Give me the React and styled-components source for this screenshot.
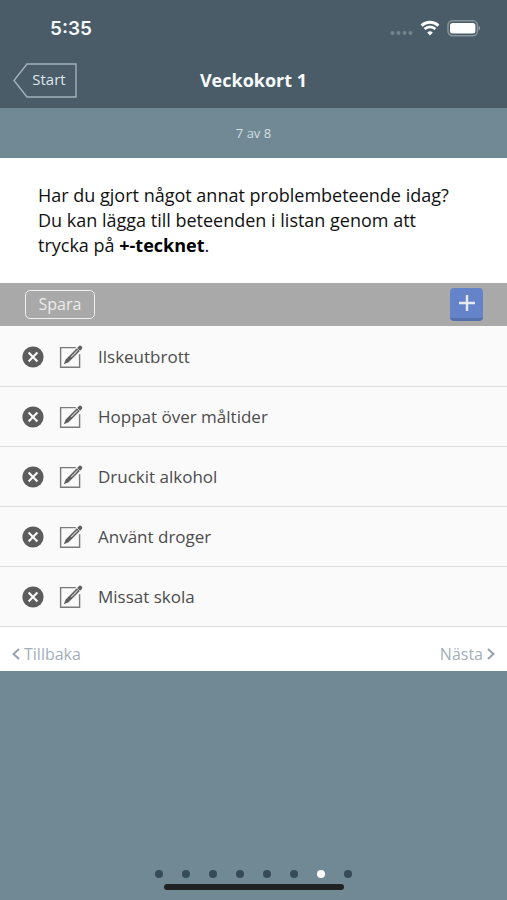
import React, { useState } from "react";
import styled, { createGlobalStyle } from "styled-components";

const behaviours = [
  "Ilskeutbrott",
  "Hoppat över måltider",
  "Druckit alkohol",
  "Använt droger",
  "Missat skola",
];

const PAGES = 8;

export default function App() {
  const [items, setItems] = useState(behaviours);
  const [page, setPage] = useState(7);

  const removeItem = (name) => setItems(items.filter((item) => item !== name));

  return (
    <Screen>
      <GlobalStyle />
      <Header>
        <StatusBar>
          <Clock>5:35</Clock>
          <StatusIcons>
            <SignalIcon />
            <WifiIcon />
            <BatteryIcon />
          </StatusIcons>
        </StatusBar>
        <NavBar>
          <StartButton type="button">
            <TagOutline />
            <StartLabel>Start</StartLabel>
          </StartButton>
          <Title>Veckokort 1</Title>
        </NavBar>
      </Header>
      <Progress>
        {page} av {PAGES}
      </Progress>
      <main>
        <Question>
          Har du gjort något annat problembeteende idag? Du kan lägga till
          beteenden i listan genom att trycka på <b>+-tecknet</b>.
        </Question>
        <Toolbar>
          <SaveButton type="button">Spara</SaveButton>
          <AddButton type="button" aria-label="Lägg till">
            <PlusIcon />
          </AddButton>
        </Toolbar>
        <List>
          {items.map((item) => (
            <Row key={item}>
              <IconButton
                type="button"
                aria-label={`Ta bort ${item}`}
                onClick={() => removeItem(item)}
              >
                <RemoveIcon />
              </IconButton>
              <IconButton type="button" aria-label={`Ändra ${item}`}>
                <EditIcon />
              </IconButton>
              <RowText>{item}</RowText>
            </Row>
          ))}
        </List>
        <Pager>
          <PagerButton
            type="button"
            onClick={() => setPage(Math.max(1, page - 1))}
          >
            <Chevron />
            Tillbaka
          </PagerButton>
          <PagerButton
            type="button"
            onClick={() => setPage(Math.min(PAGES, page + 1))}
          >
            Nästa
            <Chevron next />
          </PagerButton>
        </Pager>
      </main>
      <Bottom>
        <Dots>
          {Array.from({ length: PAGES }, (_, i) => (
            <Dot key={i} $active={i + 1 === page} />
          ))}
        </Dots>
        <HomeBar />
      </Bottom>
    </Screen>
  );
}

function SignalIcon() {
  return (
    <svg width="24" height="16" viewBox="0 0 24 16" fill="#75848d">
      <circle cx="3.5" cy="13" r="2" />
      <circle cx="9.5" cy="13" r="2" />
      <circle cx="15.5" cy="13" r="2" />
      <circle cx="21.5" cy="13" r="2" />
    </svg>
  );
}

function WifiIcon() {
  return (
    <svg width="20" height="16" viewBox="0 0 20 16" fill="none">
      <path d="M1.6 5.6a12.2 12.2 0 0 1 16.8 0" stroke="#fff" strokeWidth="2.9" />
      <path d="M4.6 9a7.8 7.8 0 0 1 10.8 0" stroke="#fff" strokeWidth="2.6" />
      <path d="M10 15.6 7.2 12.5a4 4 0 0 1 5.6 0z" fill="#fff" />
    </svg>
  );
}

function BatteryIcon() {
  return (
    <svg width="34" height="18" viewBox="0 0 34 18" fill="none">
      <rect x="1" y="1.7" width="29.4" height="15" rx="4.5" stroke="#87949b" strokeWidth="1.5" />
      <rect x="3" y="4" width="25.4" height="10.4" rx="2.5" fill="#fff" />
      <path d="M31.7 7c1.6.6 1.6 3.8 0 4.4z" fill="#a5afb5" />
    </svg>
  );
}

function TagOutline() {
  return (
    <TagSvg viewBox="0 0 64 35" fill="none">
      <path d="M1 17.5 14 1h49v33H14z" stroke="#a3b1b9" strokeWidth="1.4" />
    </TagSvg>
  );
}

function PlusIcon() {
  return (
    <svg width="16" height="16" viewBox="0 0 16 16" stroke="#e4e9f4" strokeWidth="2.4">
      <path d="M8 0v16M0 8h16" />
    </svg>
  );
}

function RemoveIcon() {
  return (
    <svg width="22" height="22" viewBox="0 0 22 22" fill="none">
      <circle cx="11" cy="11" r="10.6" fill="#5c5c5c" />
      <path d="m6.6 6.6 8.8 8.8m0-8.8-8.8 8.8" stroke="#fafafa" strokeWidth="2.1" />
    </svg>
  );
}

function EditIcon() {
  return (
    <svg width="24" height="24" viewBox="0 0 24 24" fill="none">
      <path d="M16.8 2.6H1.6v19.6h19V9.2" stroke="#7b7b7b" strokeWidth="1.4" />
      <path d="M4.8 19.2 6.6 14.4 19.6 1.4a2 2 0 0 1 3 2.8L9.6 17.2z" fill="#5f5f5f" />
      <path d="M12.2 11.8 18.6 5.4" stroke="#d2d2d2" strokeWidth="1.2" />
      <path d="m18 3 3 3" stroke="#f4f4f4" strokeWidth=".7" />
    </svg>
  );
}

function Chevron({ next }) {
  return (
    <svg width="8" height="12" viewBox="0 0 8 12" fill="none" stroke="#94a3ad" strokeWidth="2">
      <path d={next ? "M1 1l5.5 5L1 11" : "M7 1 1.5 6 7 11"} />
    </svg>
  );
}

const GlobalStyle = createGlobalStyle`
  * {
    box-sizing: border-box;
  }
  body {
    margin: 0;
    background: #708994;
    font-family: "Open Sans", "Noto Sans", sans-serif;
  }
  button {
    margin: 0;
    padding: 0;
    border: 0;
    background: none;
    font-family: inherit;
    cursor: pointer;
  }
  svg {
    display: block;
    flex-shrink: 0;
  }
`;

const Screen = styled.div`
  min-height: 100vh;
  display: flex;
  flex-direction: column;
  background: #708994;
`;

const Header = styled.header`
  background: #4a5c67;
`;

const StatusBar = styled.div`
  height: 56px;
  padding: 0 26px 0 50px;
  display: flex;
  align-items: center;
  justify-content: space-between;
`;

const Clock = styled.span`
  color: #f4f9fc;
  font-family: Inter, sans-serif;
  font-size: 19px;
  font-weight: 600;
`;

const StatusIcons = styled.div`
  display: flex;
  align-items: center;
  gap: 7px;
`;

const NavBar = styled.div`
  height: 52px;
  padding: 0 13px 4px;
  display: grid;
  grid-template-columns: 1fr auto 1fr;
  align-items: center;
`;

const StartButton = styled.button`
  display: grid;
  width: 64px;
  height: 35px;
  align-items: start;
`;

const TagSvg = styled.svg`
  grid-area: 1 / 1;
  width: 100%;
`;

const StartLabel = styled.span`
  grid-area: 1 / 1;
  padding-left: 8px;
  color: #dce6ec;
  font-size: 15px;
  line-height: 33px;
`;

const Title = styled.h1`
  margin: 0;
  color: #f6fafc;
  font-size: 18px;
  line-height: 25px;
  font-weight: 700;
`;

const Progress = styled.div`
  height: 50px;
  display: flex;
  align-items: center;
  justify-content: center;
  color: #d3dfe5;
  font-size: 13px;
`;

const Question = styled.p`
  margin: 0;
  padding: 25px 38px;
  background: #fff;
  color: #111;
  font-size: 18px;
  line-height: 25px;

  b {
    color: #000;
  }
`;

const Toolbar = styled.div`
  height: 43px;
  padding: 0 24px 0 25px;
  display: flex;
  align-items: center;
  justify-content: space-between;
  background: #a9a9a9;
`;

const SaveButton = styled.button`
  width: 70px;
  height: 29px;
  border: 1px solid #f0f0f0;
  border-radius: 5px;
  color: #ececec;
  font-size: 16px;
  line-height: 25px;
`;

const AddButton = styled.button`
  width: 33px;
  height: 33px;
  display: flex;
  align-items: center;
  justify-content: center;
  border-bottom: 3px solid #5470ad;
  border-radius: 4px;
  background: #6583c8;
`;

const List = styled.ul`
  margin: 0;
  padding: 1px 0 0;
  list-style: none;
  background: #fafafa;
`;

const Row = styled.li`
  height: 60px;
  padding: 0 22px;
  display: flex;
  align-items: center;
  gap: 15px;
  border-bottom: 1px solid #dcdcdc;
`;

const IconButton = styled.button`
  display: flex;
`;

const RowText = styled.span`
  color: #4c4c4c;
  font-size: 17px;
  line-height: 25px;
`;

const Pager = styled.nav`
  height: 44px;
  padding: 10px 12px 0;
  display: flex;
  align-items: center;
  justify-content: space-between;
  background: #fff;
`;

const PagerButton = styled.button`
  display: flex;
  align-items: center;
  gap: 4px;
  color: #a3b0b9;
  font-size: 16px;
  line-height: 25px;
`;

const Bottom = styled.footer`
  margin-top: auto;
  padding-bottom: 10px;
  display: flex;
  flex-direction: column;
  align-items: center;
  gap: 6px;
`;

const Dots = styled.div`
  display: flex;
  gap: 19px;
`;

const Dot = styled.span`
  width: 8px;
  height: 8px;
  border-radius: 50%;
  background: ${(props) => (props.$active ? "#fff" : "#364b57")};
`;

const HomeBar = styled.div`
  width: 180px;
  height: 6px;
  border-radius: 3px;
  background: #202122;
`;
